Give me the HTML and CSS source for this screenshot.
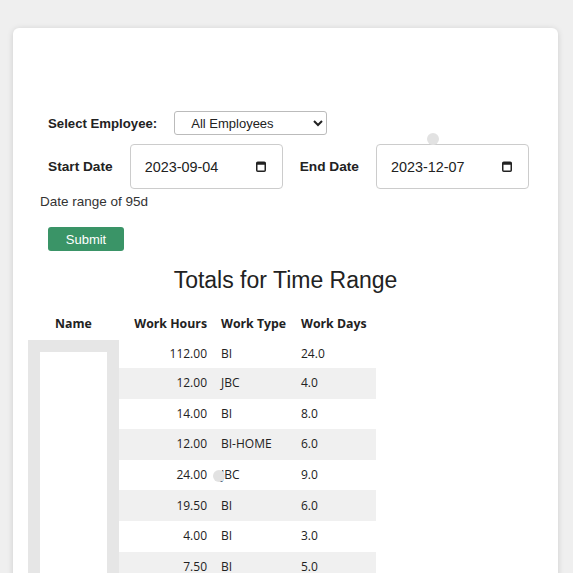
FILE: index.html
```html
<!DOCTYPE html>
<html>
<head>
<meta charset="utf-8">
<link rel="stylesheet" href="styles.css">
</head>
<body>
<div class="page">
  <div class="card">
    <form class="form">
      <div class="row row-emp">
        <label class="lbl" for="emp">Select Employee:</label>
        <select id="emp" class="sel"><option>All Employees</option></select>
      </div>
      <div class="row row-dates">
        <label class="lbl" for="sd">Start Date</label>
        <div class="date">
          <input id="sd" class="date-input" type="text" value="2023-09-04">
          <svg class="cal" width="10" height="11" viewBox="0 0 10 11"><rect x="0.75" y="1.25" width="8.5" height="9" rx="1" fill="none" stroke="#222" stroke-width="1.5"/><rect x="0.75" y="1.25" width="8.5" height="2.5" fill="#222"/></svg>
        </div>
        <label class="lbl" for="ed">End Date</label>
        <div class="date">
          <input id="ed" class="date-input" type="text" value="2023-12-07">
          <svg class="cal" width="10" height="11" viewBox="0 0 10 11"><rect x="0.75" y="1.25" width="8.5" height="9" rx="1" fill="none" stroke="#222" stroke-width="1.5"/><rect x="0.75" y="1.25" width="8.5" height="2.5" fill="#222"/></svg>
        </div>
      </div>
      <div class="range">Date range of 95d</div>
      <button type="button" class="submit">Submit</button>
    </form>
    <h2 class="title">Totals for Time Range</h2>
    <table class="totals">
      <thead>
        <tr><th class="c-name">Name</th><th class="c-hours">Work Hours</th><th class="c-type">Work Type</th><th class="c-days">Work Days</th></tr>
      </thead>
      <tbody>
        <tr class="first"><td class="name-cell" rowspan="9"><div class="name-box"></div></td><td class="c-hours">112.00</td><td class="c-type">BI</td><td class="c-days">24.0</td></tr>
        <tr class="alt"><td class="c-hours">12.00</td><td class="c-type">JBC</td><td class="c-days">4.0</td></tr>
        <tr><td class="c-hours">14.00</td><td class="c-type">BI</td><td class="c-days">8.0</td></tr>
        <tr class="alt"><td class="c-hours">12.00</td><td class="c-type">BI-HOME</td><td class="c-days">6.0</td></tr>
        <tr><td class="c-hours">24.00</td><td class="c-type">JBC</td><td class="c-days">9.0</td></tr>
        <tr class="alt"><td class="c-hours">19.50</td><td class="c-type">BI</td><td class="c-days">6.0</td></tr>
        <tr><td class="c-hours">4.00</td><td class="c-type">BI</td><td class="c-days">3.0</td></tr>
        <tr class="alt"><td class="c-hours">7.50</td><td class="c-type">BI</td><td class="c-days">5.0</td></tr>
        <tr><td class="c-hours">8.00</td><td class="c-type">JBC</td><td class="c-days">2.0</td></tr>
      </tbody>
    </table>
    <span class="dot dot-a"></span>
    <span class="dot dot-b"></span>
  </div>
</div>
</body>
</html>
```
FILE: styles.css
```css
html, body {
  margin: 0;
  background: #efefef;
  font-family: "Liberation Sans", Arial, sans-serif;
  color: #222;
}
.page {
  padding: 28px 15px 0 13px;
}
.card {
  position: relative;
  background: #fff;
  border-radius: 6px;
  box-shadow: 0 1px 6px rgba(0, 0, 0, 0.14);
  padding: 83px 0 40px;
  min-height: 600px;
}
.form {
  padding-left: 35px;
}
.row {
  display: flex;
  align-items: center;
  gap: 17px;
}
.lbl {
  font-weight: bold;
  font-size: 13.7px;
  color: #222;
}
.row-emp .lbl {
  font-size: 13.2px;
}
.sel {
  width: 153px;
  height: 24px;
  box-sizing: border-box;
  border: 1px solid #bbb;
  border-radius: 3px;
  background: #fff;
  padding: 0 0 0 12px;
  font-family: "Liberation Sans", Arial, sans-serif;
  font-size: 13px;
  color: #222;
}
.row-dates {
  margin-top: 9px;
}
.date {
  display: flex;
  align-items: center;
  width: 153px;
  height: 45px;
  box-sizing: border-box;
  border: 1px solid #ccc;
  border-radius: 4px;
  padding: 0 16px 0 14px;
  background: #fff;
}
.date-input {
  flex: 1;
  min-width: 0;
  border: none;
  outline: none;
  padding: 0;
  background: transparent;
  font-family: "Liberation Sans", Arial, sans-serif;
  font-size: 14.4px;
  color: #222;
}
.cal {
  flex: none;
  display: block;
}
.range {
  margin: 5px 0 0 -8px;
  font-size: 13.5px;
  line-height: 15px;
  color: #333;
}
.submit {
  display: block;
  margin-top: 18px;
  width: 76px;
  height: 24px;
  border: none;
  border-radius: 3px;
  background: #3a9467;
  color: #fff;
  font-family: "Liberation Sans", Arial, sans-serif;
  font-size: 13px;
  padding: 0;
}
.title {
  margin: 16px 0 0;
  text-align: center;
  font-weight: normal;
  font-size: 23px;
  line-height: 26px;
  color: #222;
}
.totals {
  margin: 17px 0 0 15px;
  border-collapse: collapse;
  font-family: "Open Sans", "DejaVu Sans", sans-serif;
  font-size: 12px;
  color: #222;
}
.totals th {
  height: 30px;
  padding: 0 7px 4px;
  box-sizing: border-box;
  font-weight: bold;
  font-size: 12.3px;
}
.totals td {
  height: 30.6px;
  padding: 0 7px;
  line-height: 16px;
}
.totals tr.first td {
  height: 28px;
}
.totals tr.alt td {
  background: #f0f0f0;
}
.c-name {
  width: 77px;
  text-align: center;
}
.c-hours {
  width: 81px;
  text-align: right;
}
.c-type {
  width: 66px;
  text-align: left;
}
.c-days {
  width: 68px;
  text-align: left;
}
.totals td.name-cell {
  background: #e6e6e6;
  padding: 12px 12px 0 12px;
  vertical-align: top;
  width: 67px;
}
.name-box {
  width: 67px;
  height: 230px;
  background: #fff;
}
.dot {
  position: absolute;
  width: 12px;
  height: 12px;
  border-radius: 50%;
  background: #e2e2e2;
}
.dot-a {
  left: 414px;
  top: 105px;
}
.dot-b {
  left: 200px;
  top: 442px;
}
```
